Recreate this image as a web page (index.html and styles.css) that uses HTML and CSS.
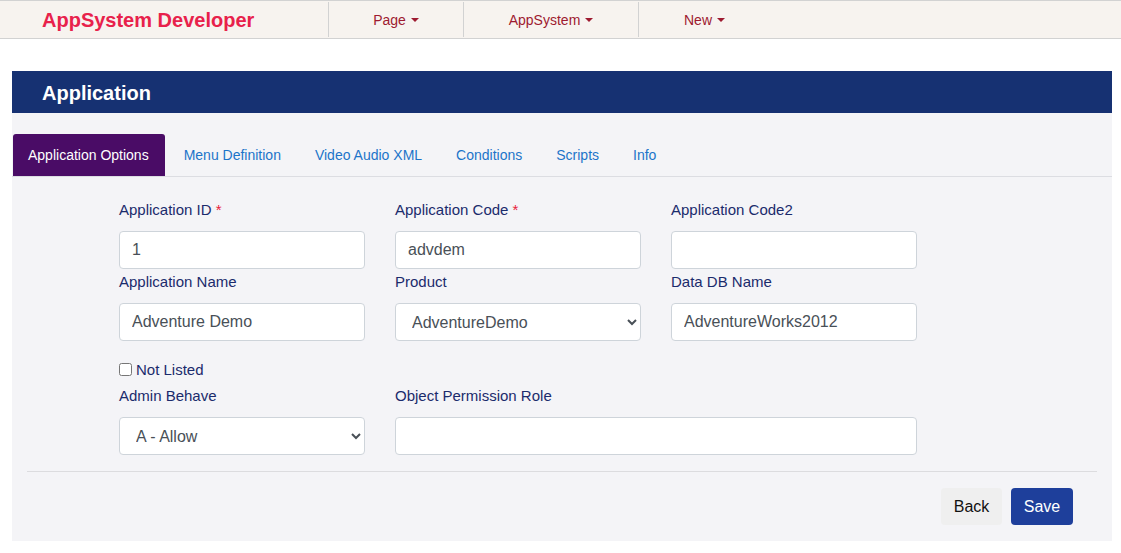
FILE: index.html
```html
<!DOCTYPE html>
<html lang="en">
<head>
<meta charset="utf-8">
<title>Application</title>
<link rel="stylesheet" href="styles.css">
</head>
<body>
<nav class="navbar">
  <div class="brand">AppSystem Developer</div>
  <div class="nav-item">Page <span class="caret"></span></div>
  <div class="nav-item">AppSystem <span class="caret"></span></div>
  <div class="nav-item nav-last">New <span class="caret"></span></div>
</nav>

<main class="page">
  <header class="page-header">Application</header>
  <section class="panel">
    <ul class="tabs">
      <li class="tab active">Application Options</li>
      <li class="tab">Menu Definition</li>
      <li class="tab">Video Audio XML</li>
      <li class="tab">Conditions</li>
      <li class="tab">Scripts</li>
      <li class="tab">Info</li>
    </ul>

    <form class="form">
      <div class="grid">
        <div class="field">
          <label class="label">Application ID <span class="req">*</span></label>
          <input class="control" type="text" value="1">
        </div>
        <div class="field">
          <label class="label">Application Code <span class="req">*</span></label>
          <input class="control" type="text" value="advdem">
        </div>
        <div class="field">
          <label class="label">Application Code2</label>
          <input class="control" type="text" value="">
        </div>
        <div class="field">
          <label class="label">Application Name</label>
          <input class="control" type="text" value="Adventure Demo">
        </div>
        <div class="field">
          <label class="label">Product</label>
          <select class="control select"><option>AdventureDemo</option></select>
        </div>
        <div class="field">
          <label class="label">Data DB Name</label>
          <input class="control" type="text" value="AdventureWorks2012">
        </div>
      </div>

      <label class="check"><input type="checkbox" class="checkbox">Not Listed</label>

      <div class="grid grid-last">
        <div class="field">
          <label class="label">Admin Behave</label>
          <select class="control select"><option>A - Allow</option></select>
        </div>
        <div class="field span2">
          <label class="label">Object Permission Role</label>
          <input class="control" type="text" value="">
        </div>
      </div>
    </form>

    <hr class="rule">
    <div class="actions">
      <button type="button" class="btn btn-back">Back</button>
      <button type="button" class="btn btn-save">Save</button>
    </div>
  </section>
</main>
</body>
</html>
```

FILE: styles.css
```css
* { box-sizing: border-box; }

html, body {
  margin: 0;
  padding: 0;
  background: #ffffff;
  font-family: "Liberation Sans", Arial, sans-serif;
}

.navbar {
  display: flex;
  align-items: stretch;
  height: 39px;
  background: #f7f3ef;
  border-top: 1px solid #d2d2d2;
  border-bottom: 1px solid #d2d2d2;
  padding-left: 42px;
}

.brand {
  display: flex;
  align-items: center;
  width: 286px;
  padding-top: 1px;
  color: #e8214b;
  font-size: 20px;
  font-weight: bold;
}

.nav-item {
  display: flex;
  align-items: center;
  justify-content: center;
  border-left: 1px solid #d2d2d2;
  color: #9e1a30;
  font-size: 14px;
  margin: 1px 0;
}

.nav-item:nth-child(2) { width: 135px; }
.nav-item:nth-child(3) { width: 175px; }
.nav-item:nth-child(4) { width: 132px; }

.caret {
  display: inline-block;
  width: 0;
  height: 0;
  margin-left: 5px;
  border-left: 4px solid transparent;
  border-right: 4px solid transparent;
  border-top: 4px solid #9e1a30;
}

.page {
  width: 1100px;
  margin: 32px 0 0 12px;
}

.page-header {
  height: 42px;
  background: #163172;
  color: #ffffff;
  font-size: 20px;
  font-weight: bold;
  padding: 3px 0 0 30px;
  display: flex;
  align-items: center;
}

.panel {
  background: #f4f4f7;
  padding: 21px 15px 16px;
}

.tabs {
  list-style: none;
  margin: 0 -15px;
  padding: 0 0 0 1px;
  display: flex;
  border-bottom: 1px solid #dcdde2;
}

.tab {
  height: 42px;
  display: flex;
  align-items: center;
  padding: 0 17px;
  font-size: 14px;
  color: #1c74c9;
  border-radius: 3px 3px 0 0;
}

.tab.active {
  background: #4a0c66;
  color: #ffffff;
  padding: 0 16px 0 15px;
  margin-right: 2px;
}

.form {
  padding: 22px 0 0 92px;
}

.grid {
  display: grid;
  grid-template-columns: 246px 246px 246px;
  column-gap: 30px;
  row-gap: 2px;
}

.span2 { grid-column: span 2; }

.field {
  display: flex;
  flex-direction: column;
}

.label {
  font-size: 15px;
  line-height: 22px;
  color: #1b2b6c;
  margin-bottom: 10px;
}

.req { color: #e8213a; }

.control {
  height: 38px;
  width: 100%;
  border: 1px solid #ced4da;
  border-radius: 4px;
  background: #ffffff;
  font-family: "Liberation Sans", Arial, sans-serif;
  font-size: 16px;
  color: #495057;
  padding: 0 12px;
  margin: 0;
}

.select {
  padding: 0 10px 0 12px;
}

.check {
  display: flex;
  align-items: center;
  margin-top: 17px;
  height: 22px;
  font-size: 15px;
  color: #1b2b6c;
}

.checkbox {
  width: 13px;
  height: 13px;
  margin: 0 4px 0 0;
}

.grid-last {
  margin-top: 5px;
}

.rule {
  border: 0;
  border-top: 1px solid #dcdcdf;
  margin: 16px 0 16px;
  height: 0;
}

.actions {
  display: flex;
  justify-content: flex-end;
  gap: 9px;
  padding-right: 24px;
}

.btn {
  height: 37px;
  border: 0;
  border-radius: 4px;
  font-family: "Liberation Sans", Arial, sans-serif;
  font-size: 16px;
  padding: 0 12px;
}

.btn-back {
  background: #efefef;
  color: #111111;
  width: 61px;
}

.btn-save {
  background: #1e3f9b;
  color: #ffffff;
  width: 62px;
}
```
